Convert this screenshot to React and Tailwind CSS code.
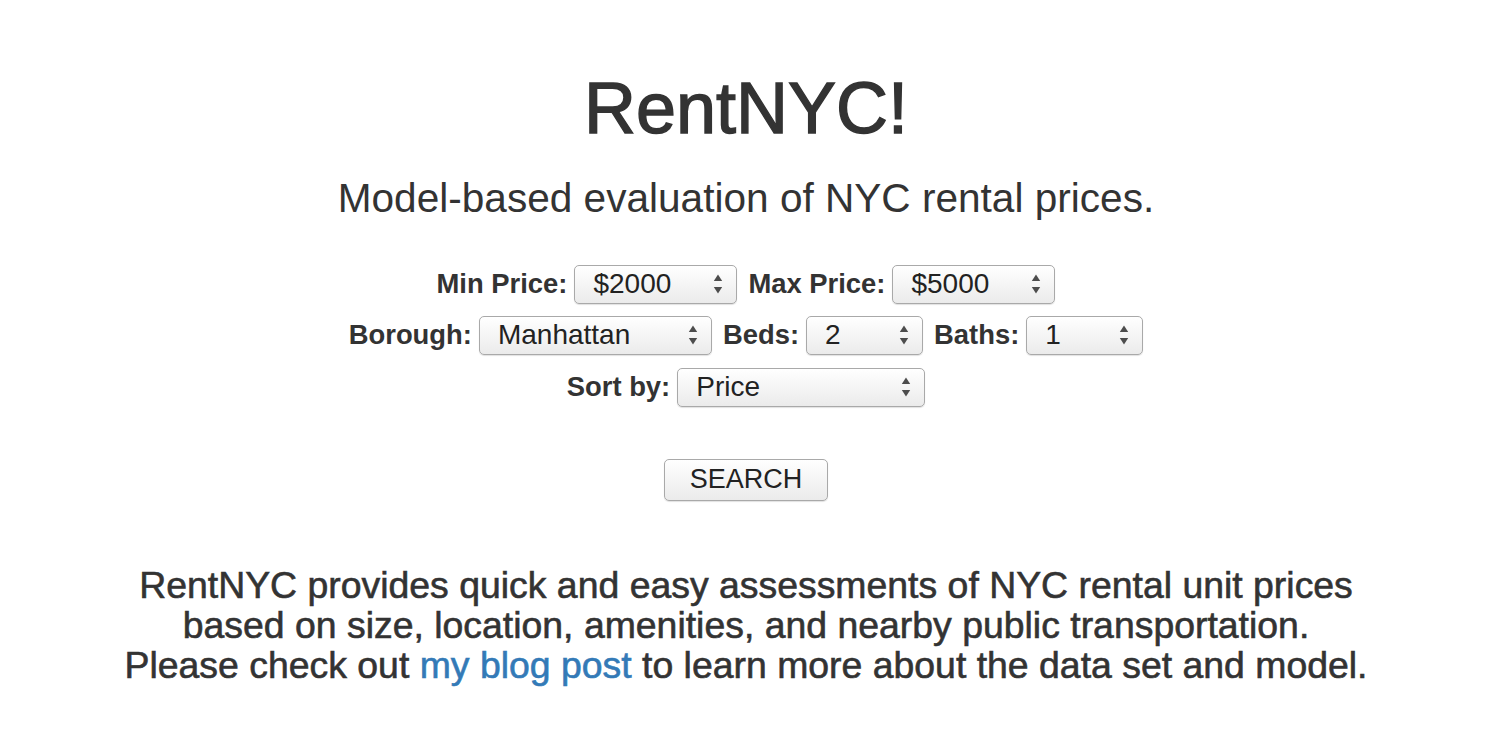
import React from 'react'

function Arrows() {
  return (
    <svg width="10" height="20" viewBox="0 0 10 20" className="shrink-0">
      <path d="M5 0.5 L9.2 7 L0.8 7 Z" fill="#4d4d4d" />
      <path d="M5 19.5 L9.2 13 L0.8 13 Z" fill="#4d4d4d" />
    </svg>
  )
}

function FakeSelect({ value, width }) {
  return (
    <div
      className="flex h-[39px] items-center justify-between rounded-[5px] border border-[#a9a9a9] bg-gradient-to-b from-white to-[#ebebeb] pl-[18px] pr-[13px] text-[28px] leading-none text-[#222] shadow-[0_1px_1px_rgba(0,0,0,0.12)]"
      style={{ width }}
    >
      <span>{value}</span>
      <Arrows />
    </div>
  )
}

function Field({ label, value, width, first }) {
  return (
    <div className={`flex items-center ${first ? '' : 'ml-[11px]'}`}>
      <span className="mr-[7px] text-[27.4px] font-bold leading-none text-[#333]">{label}</span>
      <FakeSelect value={value} width={width} />
    </div>
  )
}

export default function App() {
  return (
    <div className="min-h-screen bg-white font-['Liberation_Sans',Arial,sans-serif] text-[#333]">
      <div className="flex w-[1492px] flex-col items-center pt-[72px]">
        <h1 className="text-[72px] leading-none [-webkit-text-stroke:1.4px_#333]">RentNYC!</h1>
        <p className="mt-[34px] text-[40.6px] leading-none">Model-based evaluation of NYC rental prices.</p>

        {/* filters */}
        <div className="mt-[46px] flex items-center justify-center">
          <Field first label="Min Price:" value="$2000" width={163} />
          <Field label="Max Price:" value="$5000" width={163} />
        </div>
        <div className="mt-3 flex items-center justify-center">
          <Field first label="Borough:" value="Manhattan" width={233} />
          <Field label="Beds:" value="2" width={117} />
          <Field label="Baths:" value="1" width={117} />
        </div>
        <div className="mt-[13px] flex items-center justify-center">
          <Field first label="Sort by:" value="Price" width={248} />
        </div>

        <button className="mt-[52px] h-[42px] w-[164px] rounded-[5px] border border-[#a9a9a9] bg-gradient-to-b from-white to-[#ebebeb] text-[27px] leading-none text-[#222] shadow-[0_1px_1px_rgba(0,0,0,0.12)]">
          SEARCH
        </button>

        <div className="mt-[64px] text-center text-[37.4px] leading-[40px] [-webkit-text-stroke:0.6px_#333]">
          <div>RentNYC provides quick and easy assessments of NYC rental unit prices</div>
          <div>based on size, location, amenities, and nearby public transportation.</div>
          <div>
            Please check out{' '}
            <a href="#" className="text-[#337ab7] [-webkit-text-stroke:0.6px_#337ab7]">my blog post</a>{' '}
            to learn more about the data set and model.
          </div>
        </div>
      </div>
    </div>
  )
}
